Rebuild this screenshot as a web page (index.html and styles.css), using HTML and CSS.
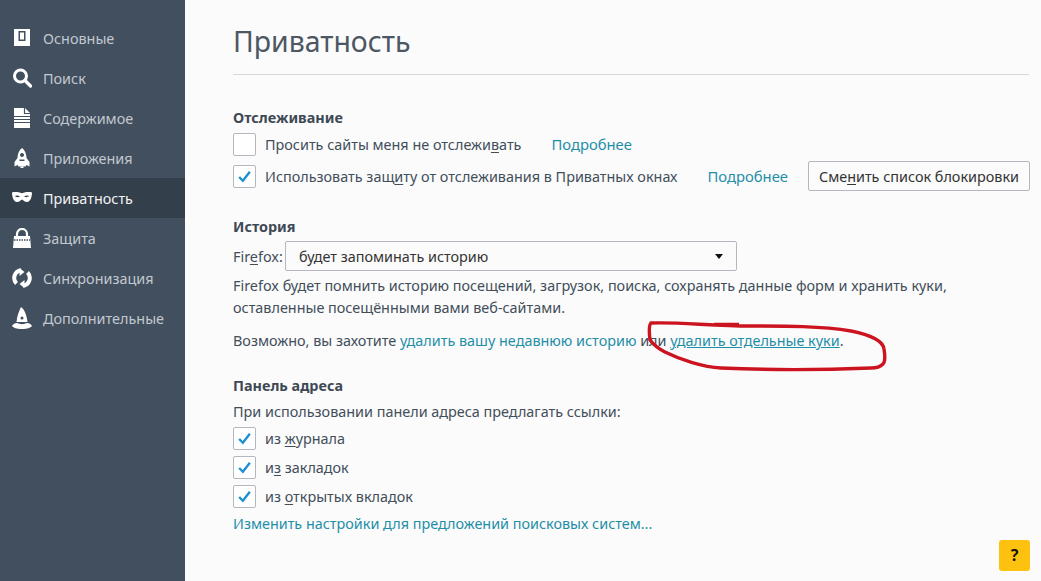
FILE: index.html
```html
<!DOCTYPE html>
<html lang="ru">
<head>
    <meta charset="UTF-8">
    <title>Приватность</title>
    <link rel="stylesheet" href="styles.css">
</head>
<body>
    <!-- Sidebar -->
    <aside class="sidebar">
        <a class="cat">
            <svg class="cat-icon" viewBox="0 0 20 20"><path fill="#fff" fill-rule="evenodd" d="M2 1h16v17H2zM6.500 3v10h7V3zM8 4.500h4v7H8z"/><path fill="#fff" d="M9.200 5.500h1.600v5H9.200z"/></svg>
            <span>Основные</span>
        </a>
        <a class="cat">
            <svg class="cat-icon" viewBox="0 0 20 20"><circle cx="8.500" cy="8" r="6" fill="none" stroke="#fff" stroke-width="3"/><path d="M13 12.500l5.500 5.500" stroke="#fff" stroke-width="3.200" stroke-linecap="round"/></svg>
            <span>Поиск</span>
        </a>
        <a class="cat">
            <svg class="cat-icon" viewBox="0 0 20 20"><path fill="#fff" d="M2 0h11l5 5v15H2z"/><path stroke="#424f5e" stroke-width="1.200" fill="none" d="M2 8.500h16M2 11.500h16M2 14.500h16M12.500 0v5.500H18"/></svg>
            <span>Содержимое</span>
        </a>
        <a class="cat">
            <svg class="cat-icon" viewBox="0 0 20 20"><path fill="#fff" fill-rule="evenodd" d="M10 0c2.800 2 4.500 6 4.500 10l3 4v4.500l-3-1.500-1 1.500h-7l-1-1.500-3 1.500V14l3-4C5.500 6 7.200 2 10 0zM10 5a2 2 0 1 0 .01 0zM7.500 13h5v-1.500h-5z"/><path fill="#fff" d="M8.500 18.500h3V20h-3z"/></svg>
            <span>Приложения</span>
        </a>
        <a class="cat selected">
            <svg class="cat-icon" viewBox="0 0 20 20"><path fill="#fff" fill-rule="evenodd" d="M0 4.500c3-.8 7-.3 10 .8 3-1.100 7-1.600 10-.8 0 5-2 9.500-5 9.500-2 0-3.500-1.500-5-2.500-1.500 1-3 2.500-5 2.500-3 0-5-4.500-5-9.500zM3 8c1 1.500 3.500 1.500 5 .5-1.500-1.200-3.500-1.500-5-.5zM17 8c-1-1-3-.7-5 .5 1.500 1 4 1 5-.5z"/></svg>
            <span>Приватность</span>
        </a>
        <a class="cat">
            <svg class="cat-icon" viewBox="0 0 20 20"><path fill="none" stroke="#fff" stroke-width="2.200" d="M5 8V6a5 5 0 0 1 10 0v2"/><path fill="#fff" d="M2 8h16l1 12H1z"/><path stroke="#424f5e" stroke-width="1.400" stroke-dasharray="1.500 1" d="M2 12h16"/></svg>
            <span>Защита</span>
        </a>
        <a class="cat">
            <svg class="cat-icon" viewBox="0 0 20 20"><path fill="none" stroke="#fff" stroke-width="4" d="M4.500 15.500A7.800 7.800 0 0 1 9 2.300M15.500 4.500A7.800 7.800 0 0 1 11 17.700"/><path fill="#fff" d="M7.500 0v8l5-4zM12.500 20v-8l-5 4z"/></svg>
            <span>Синхронизация</span>
        </a>
        <a class="cat">
            <svg class="cat-icon cat-icon-hat" viewBox="0 0 20 22"><path fill="#fff" d="M9 0c3 2 5.500 7 6.500 15h-11C5 9 7 4 9 0z"/><circle cx="10" cy="11" r="1.500" fill="#424f5e"/><path fill="#fff" d="M0 19c1-2 3-3 5-3 3 1.500 7 1.500 10 0 2 0 4 1 5 3-2 2-4 3-10 3S2 21 0 19z"/></svg>
            <span>Дополнительные</span>
        </a>
    </aside>

    <!-- Main pane -->
    <main class="pane">
        <h1 class="pane-title">Приватность</h1>

        <section class="group group-tracking">
            <h2>Отслеживание</h2>
            <div class="row">
                <span class="checkbox"></span>
                <span class="label">Просить сайты меня не отслежи<u>в</u>ать</span>
                <a class="link more">Подробнее</a>
            </div>
            <div class="row">
                <span class="checkbox checked"><svg viewBox="0 0 14 14"><path d="M2 7.500l3.500 3.500L12 2.500" fill="none" stroke="#1c8fd0" stroke-width="2.200"/></svg></span>
                <span class="label">Использовать защ<u>и</u>ту от отслеживания в Приватных окнах</span>
                <a class="link more">Подробнее</a>
                <button class="btn">Сме<u>н</u>ить список блокировки</button>
            </div>
        </section>

        <section class="group group-history">
            <h2>История</h2>
            <div class="row select-row">
                <span class="select-label">Fir<u>e</u>fox:</span>
                <div class="select">
                    <span>будет запоминать историю</span>
                    <span class="arrow"></span>
                </div>
            </div>
            <p class="desc">Firefox будет помнить историю посещений, загрузок, поиска, сохранять данные форм и хранить куки, оставленные посещёнными вами веб-сайтами.</p>
            <p class="maybe">Возможно, вы захотите <a class="link">удалить вашу недавнюю историю</a> или <a class="link hovered">удалить отдельные куки</a>.</p>
        </section>

        <section class="group group-address">
            <h2>Панель адреса</h2>
            <p class="intro">При использовании панели адреса предлагать ссылки:</p>
            <div class="row row-tight">
                <span class="checkbox checked"><svg viewBox="0 0 14 14"><path d="M2 7.500l3.500 3.500L12 2.500" fill="none" stroke="#1c8fd0" stroke-width="2.200"/></svg></span>
                <span class="label">из <u>ж</u>урнала</span>
            </div>
            <div class="row row-tight">
                <span class="checkbox checked"><svg viewBox="0 0 14 14"><path d="M2 7.500l3.500 3.500L12 2.500" fill="none" stroke="#1c8fd0" stroke-width="2.200"/></svg></span>
                <span class="label">и<u>з</u> закладок</span>
            </div>
            <div class="row row-tight">
                <span class="checkbox checked"><svg viewBox="0 0 14 14"><path d="M2 7.500l3.500 3.500L12 2.500" fill="none" stroke="#1c8fd0" stroke-width="2.200"/></svg></span>
                <span class="label">из <u>о</u>ткрытых вкладок</span>
            </div>
            <a class="link search-link">Изменить настройки для предложений поисковых систем...</a>
        </section>
    </main>

    <!-- Help button -->
    <div class="help">?</div>

    <!-- Red marker drawn over the screenshot -->
    <svg class="scribble" viewBox="0 0 1041 581"><path d="M714 324.500h25M650 340c-1-8-1-15 1-17 30-1 60 3 100 3 35 0 70 0 100 5 20 4 32 10 33 18 1 6 1 13-1 15-2 2-6 4-12 4-50 2-105 2-150 0-18-1-40-8-56-16-6-3-12-8-15-12z" fill="none" stroke="#cc1420" stroke-width="3.400"/></svg>
</body>
</html>
```

FILE: styles.css
```css
/* General styles */
html, body {
    height: 100%;
}

body {
    margin: 0;
    display: flex;
    background: #fbfbfb;
    color: #424e5a;
    font-family: 'Noto Sans', sans-serif;
    font-size: 14.4px;
    overflow: hidden;
}

u {
    text-underline-offset: 2px;
}

/* Sidebar */
.sidebar {
    flex: 0 0 185px;
    padding-top: 18px;
    background: #424f5e;
    box-sizing: border-box;
}

.cat {
    display: flex;
    align-items: center;
    gap: 11px;
    height: 40px;
    padding-left: 12px;
    color: #c1c8d0;
}

.cat.selected {
    background: #343f4c;
    color: #f2f2f2;
}

.cat-icon {
    flex: 0 0 20px;
    width: 20px;
    height: 20px;
}

.cat-icon-hat {
    height: 22px;
}

/* Main pane */
.pane {
    flex: 1;
    padding: 0 12px 0 48px;
    min-width: 0;
}

.pane-title {
    margin: 0;
    height: 75px;
    box-sizing: border-box;
    padding-top: 21px;
    border-bottom: 1px solid #d5d8dc;
    font-size: 28.4px;
    font-weight: 400;
    line-height: 40px;
    color: #4c5763;
}

.group h2 {
    margin: 0;
    font-size: 14.4px;
    font-weight: 700;
    line-height: 20px;
    color: #3e4955;
}

.group-tracking {
    margin-top: 33px;
}

.group-history {
    margin-top: 25px;
}

.group-address {
    margin-top: 24px;
}

.row {
    display: flex;
    align-items: center;
    height: 32px;
}

.row-tight {
    height: 29px;
}

.label {
    margin-left: 9px;
    white-space: nowrap;
}

.checkbox {
    flex: 0 0 23px;
    display: flex;
    align-items: center;
    justify-content: center;
    height: 23px;
    box-sizing: border-box;
    border: 1px solid #b3b8bf;
    border-radius: 2px;
    background: #fff;
}

.checkbox svg {
    width: 15px;
    height: 15px;
}

.link {
    color: #1f8fa8;
}

.link.hovered {
    text-decoration: underline;
}

.more {
    margin-left: 30px;
    font-size: 14.8px;
}

.btn {
    margin-left: 20px;
    flex: 0 0 222px;
    height: 30px;
    padding: 0;
    border: 1px solid #b3b8bf;
    border-radius: 2px;
    background: #fbfbfb;
    color: #333;
    font: inherit;
}

/* History */
.select-row {
    height: 30px;
    margin-top: 4px;
}

.select-label {
    width: 52px;
}

.select {
    flex: 0 0 452px;
    display: flex;
    align-items: center;
    justify-content: space-between;
    height: 30px;
    box-sizing: border-box;
    padding: 0 13px;
    border: 1px solid #b3b8bf;
    border-radius: 2px;
    background: #fbfbfb;
    color: #333;
}

.arrow {
    width: 0;
    height: 0;
    border-left: 4.500px solid transparent;
    border-right: 4.500px solid transparent;
    border-top: 5px solid #111;
}

.desc {
    margin: 4px 0 0;
    width: 740px;
    line-height: 22px;
}

.maybe {
    margin: 11px 0 0;
    line-height: 22px;
}

/* Address bar */
.intro {
    margin: 6px 0 0;
    line-height: 20px;
}

.intro + .row {
    margin-top: 2px;
}

.search-link {
    display: block;
    margin-top: 2px;
    line-height: 22px;
}

/* Help button */
.help {
    position: absolute;
    left: 999px;
    top: 540px;
    width: 31px;
    height: 31px;
    border-radius: 3px;
    background: #fdc20f;
    color: #111;
    font-weight: 700;
    font-size: 16px;
    line-height: 31px;
    text-align: center;
}

/* Red marker */
.scribble {
    position: absolute;
    left: 0;
    top: 0;
    width: 1041px;
    height: 581px;
    pointer-events: none;
}
```
